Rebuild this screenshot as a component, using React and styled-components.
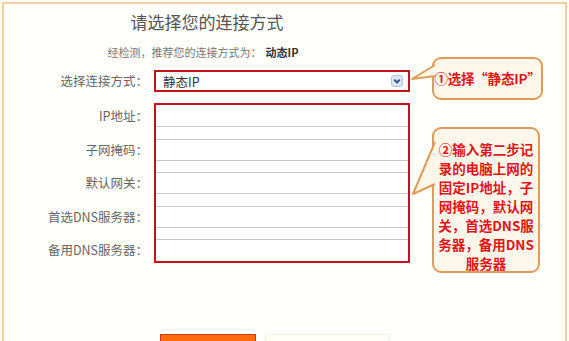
import React from 'react';
import styled, { createGlobalStyle } from 'styled-components';

const GlobalStyle = createGlobalStyle`
  html, body {
    margin: 0;
    padding: 0;
    background: #fffefa;
    overflow: hidden;
  }
  body {
    font-family: "Noto Sans CJK SC", "Liberation Sans", sans-serif;
  }
`

const Panel = styled.div`
  margin: 2px 2px 0 2px;
  height: 360px;
  border: 2px solid #f2cf9c;
  border-bottom: none;
  background: #fffffc;
  box-sizing: border-box;
`

const Form = styled.div`
  display: grid;
  grid-template-columns: 150px 256px 22px 111px;
  align-items: start;
`

const Title = styled.h1`
  grid-column: 1 / 3;
  margin: 7px 0 0 0;
  text-align: center;
  font-size: 17px;
  line-height: 22px;
  font-weight: normal;
  color: #555;
`

const Sub = styled.div`
  grid-column: 1 / 3;
  margin: 11px 0 0 0;
  padding-right: 8px;
  text-align: center;
  font-size: 11px;
  line-height: 16px;
  color: #777;
  b {
    color: #333;
    font-weight: bold;
    margin-left: 4px;
  }
`

const Label = styled.div`
  height: 22px;
  line-height: 22px;
  padding-right: 6px;
  text-align: right;
  font-size: 12.5px;
  color: #666;
  white-space: nowrap;
`

const SelectLabel = styled(Label)`
  grid-column: 1;
  margin-top: 10px;
`

const Select = styled.div`
  grid-column: 2;
  margin-top: 10px;
  height: 22px;
  box-sizing: border-box;
  border: 2px solid #c8101c;
  display: flex;
  align-items: center;
  justify-content: space-between;
  padding: 0 5px 0 7px;
  font-size: 12.5px;
  color: #333;
  background: #fff;
`

const Arrow = styled.svg`
  width: 12px;
  height: 12px;
  display: block;
`

const Callout = styled.div`
  grid-column: 4;
  position: relative;
  box-sizing: border-box;
  border: 2px solid #e29a58;
  border-radius: 9px;
  background: #fff8ea;
  color: #e0141c;
  font-weight: bold;
  font-size: 13.5px;
  text-align: center;
`

const CalloutOne = styled(Callout)`
  margin-top: -3px;
  margin-bottom: -18px;
  height: 43px;
  line-height: 39px;
  letter-spacing: -0.2px;
  white-space: nowrap;
`

const CalloutTwo = styled(Callout)`
  margin-top: 35px;
  width: 108px;
  height: 146px;
  padding-top: 11px;
  line-height: 19px;
`

const Tail = styled.svg`
  position: absolute;
  left: -24px;
  top: 0;
  overflow: visible;
`

const LabelCol = styled.div`
  grid-column: 1;
  margin-top: 11px;
  padding-top: 2px;
  display: flex;
  flex-direction: column;
  gap: 11.5px;
`

const FieldBox = styled.div`
  grid-column: 2;
  margin-top: 11px;
  border: 2px solid #c8101c;
  display: flex;
  flex-direction: column;
  gap: 11.5px;
  background: #fff;
`

const Input = styled.div`
  height: 22px;
  box-sizing: border-box;
  border-top: 1px solid ${p => (p.$first ? 'transparent' : '#c9c9c9')};
  border-bottom: 1px solid ${p => (p.$last ? 'transparent' : '#c9c9c9')};
  background: #fff;
`

const Buttons = styled.div`
  grid-column: 2 / 5;
  margin-top: 61px;
  padding-left: 6px;
  display: flex;
  gap: 9px;
`

const Button = styled.div`
  height: 24px;
  box-sizing: border-box;
  background: ${p => (p.$primary ? '#fb6a0c' : '#fffdf6')};
  border: 1px solid ${p => (p.$primary ? '#d0361a' : '#f6efdc')};
  width: ${p => (p.$primary ? '96px' : '125px')};
`

const fields = ['IP地址：', '子网掩码：', '默认网关：', '首选DNS服务器：', '备用DNS服务器：'];
const tip2 = ['②输入第二步记', '录的电脑上网的', '固定IP地址，子', '网掩码，默认网', '关，首选DNS服', '务器，备用DNS', '服务器'];

export default function App() {
  return (
    <>
      <GlobalStyle />
      <Panel>
        <Form>
          <Title>请选择您的连接方式</Title>
          <Sub>经检测，推荐您的连接方式为：<b>动态IP</b></Sub>

          <SelectLabel>选择连接方式：</SelectLabel>
          <Select>
            <span>静态IP</span>
            <Arrow viewBox="0 0 12 12">
              <rect x="0.5" y="0.5" width="11" height="11" rx="2" fill="#dbe5f4" stroke="#b4c4dc" />
              <path d="M3.2 4.6 L6 7.4 L8.8 4.6" fill="none" stroke="#2d4b86" strokeWidth="1.8" />
            </Arrow>
          </Select>
          <CalloutOne>
            <Tail width="26" height="30">
              <path d="M25 6 L2 20 L25 17" fill="#fff8ea" stroke="#e29a58" strokeWidth="2" strokeLinejoin="round" />
            </Tail>
            ①选择“静态IP”
          </CalloutOne>

          <LabelCol>
            {fields.map(f => (
              <Label key={f}>{f}</Label>
            ))}
          </LabelCol>
          <FieldBox>
            {fields.map((f, i) => (
              <Input key={f} $first={i === 0} $last={i === fields.length - 1} />
            ))}
          </FieldBox>
          <CalloutTwo>
            <Tail width="26" height="80">
              <path d="M25 13 L3 65 L25 55" fill="#fff8ea" stroke="#e29a58" strokeWidth="2" strokeLinejoin="round" />
            </Tail>
            {tip2.map(t => (
              <div key={t}>{t}</div>
            ))}
          </CalloutTwo>

          <Buttons>
            <Button $primary />
            <Button />
          </Buttons>
        </Form>
      </Panel>
    </>
  );
}
